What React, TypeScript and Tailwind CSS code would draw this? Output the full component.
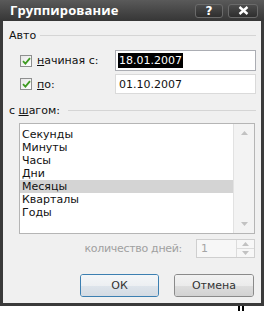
import React from 'react'

function Check() {
  return (
    <div className="w-[12px] h-[12px] border border-[#8e8f8f] bg-gradient-to-br from-[#e6e6e6] to-white flex items-center justify-center">
      <svg width="9" height="8" viewBox="0 0 9 8">
        <path d="M1 4.2 L3.4 6.6 L8 1.2" fill="none" stroke="#3f9b22" strokeWidth="1.8" />
      </svg>
    </div>
  )
}

function Arrow({ up, color = '#c2c2c2' }: { up?: boolean; color?: string }) {
  return (
    <svg width="7" height="4" viewBox="0 0 7 4">
      <path d={up ? 'M0 4 L3.5 0 L7 4 Z' : 'M0 0 L3.5 4 L7 0 Z'} fill={color} />
    </svg>
  )
}

const items = ['Секунды', 'Минуты', 'Часы', 'Дни', 'Месяцы', 'Кварталы', 'Годы']

export default function App() {
  return (
    <div className="w-[266px] h-[311px] bg-white font-['DejaVu_Sans',sans-serif] text-[11px] text-[#111] leading-none">
      <div className="w-[264px] h-[306px] bg-[#3a3a3a] flex flex-col">
        {/* title bar */}
        <div className="h-[21px] shrink-0 flex items-center bg-gradient-to-b from-[#5a5a5a] to-[#363636] pl-[10px] pr-[6px]">
          <span className="text-white font-bold font-['Open_Sans',sans-serif] text-[13px] tracking-[0.1px] flex-1">Группирование</span>
          <div className="w-[28px] h-[14px] rounded-[3px] border border-[#6a6a6a] bg-gradient-to-b from-[#4c4c4c] to-[#2e2e2e] flex items-center justify-center text-white font-bold text-[12px]">?</div>
          <div className="ml-[5px] w-[30px] h-[14px] rounded-[3px] border border-[#6a6a6a] bg-gradient-to-b from-[#4c4c4c] to-[#2e2e2e] flex items-center justify-center">
            <svg width="11" height="9" viewBox="0 0 11 9">
              <path d="M1.5 1 L9.5 8 M9.5 1 L1.5 8" stroke="white" strokeWidth="2.4" />
            </svg>
          </div>
        </div>
        {/* body */}
        <div className="flex-1 px-[3px] pb-[3px] flex">
          <div className="flex-1 bg-[#f0f0f0] flex flex-col pl-[6px] pr-[5px] pt-[8px]">
            <div className="flex items-center h-[12px]">
              <span>Авто</span>
              <div className="flex-1 ml-[4px] h-px bg-[#d5d5d5]" />
            </div>

            <div className="flex items-center mt-[9px] h-[21px]">
              <div className="ml-[11px]"><Check /></div>
              <span className="ml-[5px] flex-1"><span className="underline">н</span>ачиная с:</span>
              <div className="w-[141px] h-[21px] bg-white border border-[#abadb3] flex items-center pl-[2px]">
                <span className="bg-black text-white px-px py-[2px]">18.01.2007</span>
              </div>
            </div>
            <div className="flex items-center mt-[3px] h-[20px]">
              <div className="ml-[11px]"><Check /></div>
              <span className="ml-[5px] flex-1"><span className="underline">п</span>о:</span>
              <div className="w-[141px] h-[20px] bg-white border border-[#dadada] flex items-center pl-[3px]">01.10.2007</div>
            </div>

            <div className="flex items-center mt-[10px] h-[12px]">
              <span>с <span className="underline">ш</span>агом:</span>
              <div className="flex-1 ml-[8px] h-px bg-[#d5d5d5]" />
            </div>

            <div className="ml-[10px] mr-[1px] mt-[7px] h-[111px] bg-white border border-[#b5b5b5] flex">
              <div className="flex-1 pt-[4px]">
                {items.map((t) => (
                  <div key={t} className={`h-[13px] leading-[13px] flex items-center pl-[2px] ${t === 'Месяцы' ? 'bg-[#d4d4d4]' : ''}`}>{t}</div>
                ))}
              </div>
              <div className="w-[21px] bg-[#f3f3f3] border-l border-[#e2e2e2] flex flex-col justify-between items-center py-[7px]">
                <Arrow up />
                <Arrow />
              </div>
            </div>

            <div className="flex items-center justify-end mt-[5px] h-[19px] pr-[1px]">
              <span className="text-[#a0a0a0] mr-[14px] tracking-[-0.3px]">количество дней:</span>
              <div className="w-[59px] h-[19px] border border-[#cfcfcf] bg-[#f7f7f7] flex">
                <span className="flex-1 pl-[4px] text-[#a5a5a5] flex items-center">1</span>
                <div className="w-[18px] flex flex-col border-l border-[#dcdcdc]">
                  <div className="flex-1 flex items-center justify-center border-b border-[#dcdcdc]"><Arrow up /></div>
                  <div className="flex-1 flex items-center justify-center"><Arrow /></div>
                </div>
              </div>
            </div>

            <div className="flex justify-end gap-[15px] mt-[16px] pr-[2px]">
              <div className="w-[79px] h-[23px] rounded-[3px] border border-[#3c7fb1] flex flex-col overflow-hidden relative">
                <div className="flex-1 bg-gradient-to-b from-[#f4f6f8] to-[#eceff2]" />
                <div className="flex-1 bg-gradient-to-b from-[#dde4eb] to-[#d4dbe3]" />
                <span className="absolute inset-0 flex items-center justify-center text-[#333]">ОК</span>
              </div>
              <div className="w-[80px] h-[23px] rounded-[3px] border border-[#8a8a8a] flex flex-col overflow-hidden relative">
                <div className="flex-1 bg-gradient-to-b from-[#f2f2f2] to-[#ebebeb]" />
                <div className="flex-1 bg-gradient-to-b from-[#dddddd] to-[#d2d2d2]" />
                <span className="absolute inset-0 flex items-center justify-center text-[#333]">Отмена</span>
              </div>
            </div>
          </div>
        </div>
      </div>
      <div className="flex pl-[238px] gap-[2px] h-[5px]">
        <div className="w-[2px] bg-black" />
        <div className="w-[2px] bg-black" />
      </div>
    </div>
  )
}
